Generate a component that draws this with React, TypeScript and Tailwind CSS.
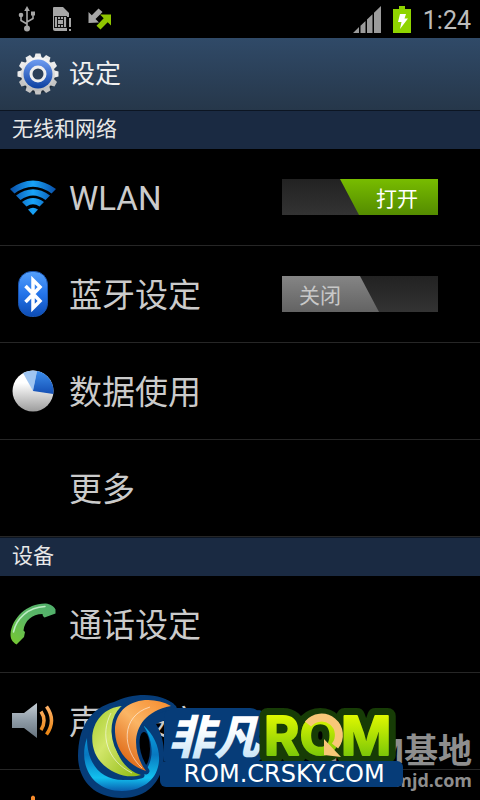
import { useState } from 'react';
import type { ReactNode } from 'react';

interface SettingRowProps {
  icon?: ReactNode;
  label: string;
  children?: ReactNode;
}

const UsbIcon = () => (
  <svg viewBox="0 0 18 26" className="h-[26px] w-[18px]" fill="none" stroke="#a6a6a6" strokeWidth="1.6">
    <path d="M9 3v18M9 18 3 14.500V9M9 16l6-3.500V8" />
    <path d="M9 0 6.200 5h5.600z" fill="#a6a6a6" stroke="none" />
    <circle cx="9" cy="22.500" r="3" fill="#a6a6a6" stroke="none" />
    <circle cx="3" cy="9" r="2.300" fill="#a6a6a6" stroke="none" />
    <path d="M13 5.500h4v4h-4z" fill="#a6a6a6" stroke="none" />
  </svg>
);

const SimIcon = () => (
  <svg viewBox="0 0 20 26" className="h-[26px] w-5">
    <path d="M1 2q0-1 1-1h9l6 6v16q0 2-2 2H3q-2 0-2-2z" fill="#a6a6a6" />
    <rect x="15" y="11" width="5" height="15" fill="#000" />
    <path d="M17 12h2v9h-2zM17 23h2v2h-2z" fill="#a6a6a6" />
    <rect x="2.500" y="10.500" width="12" height="11" fill="none" stroke="#111" />
    <path d="M5.500 10.500v3M8.500 10.500v3M11.500 10.500v3M5.500 18.500v3M8.500 18.500v3M11.500 18.500v3" stroke="#111" />
    <rect x="5.500" y="13.500" width="6" height="5" fill="none" stroke="#111" />
  </svg>
);

const SyncIcon = () => (
  <svg viewBox="0 0 24 22" className="h-[22px] w-6">
    <path d="M.500 15V4l3.300 3.300L10.500 .500l4 3.500-7 7L11 14.500z" fill="#a6a6a6" />
    <path d="M23 6.500v11l-3.300-3.300L12.500 21.500l-4-3.800 7.200-7.400L12 6.500z" fill="#8fc400" />
  </svg>
);

const SignalIcon = () => (
  <svg viewBox="0 0 28 27" className="h-[27px] w-7" fill="#9b9b9b">
    <path d="M0 27 6 21v6zM7.500 19.800l5-4.900V27h-5zM14 13.500l5.500-5.300V27H14zM21 6.700 28 0v27h-7z" />
  </svg>
);

const BatteryIcon = () => (
  <svg viewBox="0 0 18 27" className="h-[27px] w-[18px]">
    <path d="M6 0h6v3h6v24H0V3h6z" fill="#8fd400" />
    <path d="M7 8h6l-1.500 4.500H15L7 23l1.500-7H5z" fill="#fff" />
  </svg>
);

const TEETH = [0, 30, 60, 90, 120, 150, 180, 210, 240, 270, 300, 330];

const GearIcon = () => (
  <svg viewBox="0 0 42 42" className="h-[42px] w-[42px]">
    <defs>
      <linearGradient id="gearMetal" gradientUnits="userSpaceOnUse" x1="0" y1="0" x2="0" y2="42">
        <stop offset="0" stopColor="#fff" />
        <stop offset="1" stopColor="#b4b4b4" />
      </linearGradient>
      <linearGradient id="gearBlue" x1="0" y1="0" x2="0" y2="1">
        <stop offset="0" stopColor="#6f9df2" />
        <stop offset="1" stopColor="#0c3fa0" />
      </linearGradient>
    </defs>
    <circle cx="21" cy="22" r="18" fill="#1b2733" />
    <g>
      {TEETH.map((angle) => (
        <path key={angle} d="M17 6l1.500-5.500h5L25 6z" fill={angle > 90 && angle < 270 ? '#c4c4c4' : '#ececec'} transform={`rotate(${angle} 21 21)`} />
      ))}
    </g>
    <circle cx="21" cy="21" r="17" fill="url(#gearMetal)" />
    <circle cx="21" cy="21" r="14.500" fill="url(#gearBlue)" />
    <circle cx="21" cy="21" r="7" fill="#2b3f58" stroke="#eee" strokeWidth="3" />
  </svg>
);

const WifiIcon = () => (
  <svg viewBox="0 0 46 36" className="h-9 w-[46px]">
    <defs>
      <linearGradient id="wifiBlue" gradientUnits="userSpaceOnUse" x1="0" y1="0" x2="46" y2="0">
        <stop offset="0" stopColor="#0a4fa8" />
        <stop offset="0.5" stopColor="#18a4f8" />
        <stop offset="1" stopColor="#0a4fa8" />
      </linearGradient>
    </defs>
    <g fill="url(#wifiBlue)">
      <path d="M0 10Q23-7 46 10l-4.500 4.500Q23 1 4.500 14.500z" />
      <path d="M6 16.500Q23 4 40 16.500L35.500 21Q23 12 10.500 21z" />
      <path d="M12 23Q23 15 34 23L29.500 27.500Q23 23 16.500 27.500z" />
      <path d="M18 30.500Q23 27 28 30.500L23 36z" />
    </g>
  </svg>
);

const BluetoothIcon = () => (
  <svg viewBox="0 0 30 46" className="h-[46px] w-[30px]">
    <defs>
      <linearGradient id="btBlue" x1="0" y1="0" x2="0" y2="1">
        <stop offset="0" stopColor="#55a0fb" />
        <stop offset="0.5" stopColor="#2474ea" />
        <stop offset="1" stopColor="#0d4cb4" />
      </linearGradient>
    </defs>
    <rect x="0.500" y="0.500" width="29" height="45" rx="13" fill="url(#btBlue)" stroke="#1a55b0" />
    <path d="M7.500 15 22 30 15 37V9l7 7L7.500 31" fill="none" stroke="#fff" strokeWidth="3.500" />
  </svg>
);

const DataUsageIcon = () => (
  <svg viewBox="0 0 42 42" className="h-[42px] w-[42px]">
    <defs>
      <linearGradient id="pieWhite" x1="0" y1="0" x2="0" y2="1">
        <stop offset="0.3" stopColor="#fff" />
        <stop offset="1" stopColor="#9c9c9c" />
      </linearGradient>
      <linearGradient id="pieBlue" x1="0" y1="0" x2="0" y2="1">
        <stop offset="0" stopColor="#3c8eec" />
        <stop offset="1" stopColor="#144fb4" />
      </linearGradient>
    </defs>
    <circle cx="21" cy="21" r="20.500" fill="url(#pieWhite)" />
    <path d="M21 21 11 3A20.500 20.500 0 0 1 25 .900z" fill="#9fc5f1" />
    <path d="M21 21 25 .900A20.500 20.500 0 0 1 41.300 24z" fill="url(#pieBlue)" />
  </svg>
);

const PhoneIcon = () => (
  <svg viewBox="0 0 46 42" className="h-[42px] w-[46px]">
    <defs>
      <linearGradient id="phoneGreen" x1="1" y1="0" x2="0" y2="1">
        <stop offset="0" stopColor="#4fae6c" />
        <stop offset="0.5" stopColor="#5cb765" />
        <stop offset="1" stopColor="#77c92e" />
      </linearGradient>
    </defs>
    <path d="M6.500 41.500C2 38.500 .500 36 .500 31 2 15 17 0 36 .500c4 .500 8 2.500 9.500 6V10.500L34.500 14.500q-2-.500-2-3.500C22 11 14.500 18 13.500 27.500l1.500 1.500-1 5z" fill="url(#phoneGreen)" />
    <path d="M3.500 29C6 16 18 4 35 3.500" fill="none" stroke="#bdecc4" strokeWidth="1.500" strokeLinecap="round" />
  </svg>
);

const SoundIcon = () => (
  <svg viewBox="0 0 42 36" className="h-9 w-[42px]">
    <defs>
      <linearGradient id="speakerSteel" x1="0" y1="0" x2="0" y2="1">
        <stop offset="0" stopColor="#c5ced5" />
        <stop offset="0.500" stopColor="#8e9ba6" />
        <stop offset="1" stopColor="#66737e" />
      </linearGradient>
      <linearGradient id="waveOrange" x1="0" y1="0" x2="0" y2="1">
        <stop offset="0" stopColor="#ffb268" />
        <stop offset="1" stopColor="#e98412" />
      </linearGradient>
    </defs>
    <path d="M0 10h12L25 0v35L12 25H0z" fill="url(#speakerSteel)" />
    <path d="M29 8.500q6 9 0 18.500M34.500 3.500q10 14 0 28" fill="none" stroke="url(#waveOrange)" strokeWidth="3.500" />
  </svg>
);

const DisplayIcon = () => (
  <svg viewBox="0 0 46 46" className="h-[46px] w-[46px]">
    <path d="M21 2q2-3 4 0v10h-4z" fill="#f58a2c" />
    <circle cx="23" cy="26" r="11" fill="#f9a13c" />
  </svg>
);

const SettingRow = ({ icon, label, children }: SettingRowProps) => (
  <li className="flex h-[97px] shrink-0 items-center border-b border-[#262626] pr-[42px] pl-[9px]">
    <span className="flex w-12 shrink-0 items-center justify-center">{icon}</span>
    <span className="mt-1 ml-3 flex-1 whitespace-nowrap text-[33px] leading-10 text-[#cbcbcb]">{label}</span>
    {children}
  </li>
);

const SectionTitle = ({ children }: { children: ReactNode }) => (
  <h2 className="h-[39px] shrink-0 border-t border-[#0c1522] bg-[#1a2a42] px-3 text-[21px] leading-9 text-[#e8e8e8]">
    {children}
  </h2>
);

const Toggle = ({ label, defaultOn = false }: { label: string; defaultOn?: boolean }) => {
  const [on, setOn] = useState(defaultOn);

  return (
    <button
      type="button"
      role="switch"
      aria-checked={on}
      aria-label={label}
      onClick={() => setOn(!on)}
      className={`flex h-9 w-[156px] shrink-0 bg-linear-to-b from-[#222] to-[#333] ${on ? 'justify-end' : 'justify-start'}`}
    >
      {on ? (
        <span className="h-9 w-[98px] bg-linear-to-b from-[#78bc00] to-[#548c00] pr-5 text-right text-[21px] leading-10 text-white [clip-path:polygon(0_0,100%_0,100%_100%,19px_100%)]">
          打开
        </span>
      ) : (
        <span className="h-9 w-[97px] bg-linear-to-b from-[#858585] to-[#636363] pl-[17px] text-left text-[21px] leading-10 text-[#c8c8c8] [clip-path:polygon(0_0,78px_0,100%_100%,0_100%)]">
          关闭
        </span>
      )}
    </button>
  );
};

const SiteLogo = () => (
  <svg viewBox="0 0 326 106" className="h-[106px] w-[326px]">
    <defs>
      <linearGradient id="ringBlue" x1="0" y1="0" x2="0" y2="1">
        <stop offset="0" stopColor="#08a8e4" />
        <stop offset="0.450" stopColor="#0878c0" />
        <stop offset="0.800" stopColor="#12c0ee" />
        <stop offset="1" stopColor="#0a5fb0" />
      </linearGradient>
      <linearGradient id="leafGreen" x1="0" y1="0" x2="1" y2="1">
        <stop offset="0" stopColor="#a5cc2c" />
        <stop offset="0.400" stopColor="#d2e66a" />
        <stop offset="1" stopColor="#8cb80e" />
      </linearGradient>
      <linearGradient id="leafOrange" x1="1" y1="0" x2="0.300" y2="1">
        <stop offset="0" stopColor="#f58a2c" />
        <stop offset="0.500" stopColor="#fbb565" />
        <stop offset="1" stopColor="#dd6412" />
      </linearGradient>
      <linearGradient id="wordWhite" x1="0" y1="0" x2="0" y2="1">
        <stop offset="0.400" stopColor="#fff" />
        <stop offset="1" stopColor="#b9def6" />
      </linearGradient>
      <linearGradient id="wordGreen" gradientUnits="userSpaceOnUse" x1="0" y1="20" x2="0" y2="64">
        <stop offset="0" stopColor="#e2fa00" />
        <stop offset="1" stopColor="#76c408" />
      </linearGradient>
    </defs>
    {/* dark outline plates */}
    <g fill="#063c78">
      <path d="M0 62C0 34 12 14 36 8 56-2 84-2 98 12q4 8-6 12L78 30C94 56 88 104 44 104 14 104 0 84 0 62z" />
      <path d="M96 14h76q9 0 9 9v44H86V24q0-10 10-10z" />
    </g>
    <ellipse cx="66" cy="55" rx="6" ry="17" fill="#000" />
    <path d="M65 31C90 52 88 96 44 97 12 97 0 68 9 44c0 26 14 42 36 42 30 0 36-32 20-55z" fill="url(#ringBlue)" />
    <g stroke="#063c78" strokeWidth="7" strokeLinejoin="round" paintOrder="stroke">
      <path d="M45 12C22 13 8 36 17 59c8 18 30 27 46 22C38 74 27 38 45 12z" fill="url(#leafGreen)" />
      <path d="M93 12C70-1 36 7 37 38c1 19 13 33 31 39C52 56 52 20 93 12z" fill="url(#leafOrange)" />
    </g>
    <path d="M33 19C22 40 28 66 54 79M72 13C42 22 44 56 64 74" fill="none" stroke="#fff" strokeOpacity="0.550" />
    <text
      x="90"
      y="60"
      fill="url(#wordWhite)"
      stroke="#063c78"
      strokeWidth="12"
      strokeLinejoin="round"
      paintOrder="stroke"
      className="font-['Noto_Sans_CJK_SC',sans-serif] text-[46px] font-black italic"
    >
      非凡
    </text>
    <text
      x="186"
      y="61"
      fill="#173c06"
      stroke="#173c06"
      strokeWidth="16"
      strokeLinejoin="round"
      aria-hidden="true"
      className="font-['Inter',sans-serif] text-[54px] font-bold"
    >
      ROM
    </text>
    <text
      x="186"
      y="61"
      fill="url(#wordGreen)"
      stroke="url(#wordGreen)"
      strokeWidth="2"
      strokeLinejoin="round"
      className="font-['Inter',sans-serif] text-[54px] font-bold"
    >
      ROM
    </text>
    <path d="M230 30A17 17 0 0 1 257 52" fill="none" stroke="#f8c777" strokeWidth="8" />
    <path d="M246 45l17 18-17-2z" fill="#f8c777" />
    <rect x="82" y="67" width="243" height="26" rx="6" fill="#063c78" />
    <text x="206" y="88" textAnchor="middle" fill="#fff" className="font-['DejaVu_Sans',sans-serif] text-[24px]">
      ROM.CRSKY.COM
    </text>
  </svg>
);

export default function App() {
  return (
    <div className="relative flex h-screen flex-col overflow-hidden bg-black font-['Roboto','Noto_Sans_CJK_SC',sans-serif]">
      <div className="flex h-[38px] shrink-0 items-center justify-between pr-[9px] pl-[18px]">
        <div className="flex items-center gap-4">
          <UsbIcon />
          <SimIcon />
          <SyncIcon />
        </div>
        <div className="flex items-center gap-3">
          <SignalIcon />
          <BatteryIcon />
          <span className="mt-1 text-[25px] leading-8 text-[#bcbcbc]">1:24</span>
        </div>
      </div>

      <header className="flex h-[72px] shrink-0 items-center gap-2.5 bg-linear-to-b from-[#304a68] to-[#26374a] pl-[17px]">
        <GearIcon />
        <h1 className="text-[26px] leading-8 text-[#f0f0f0]">设定</h1>
      </header>

      <main className="min-h-0 flex-1 overflow-hidden">
        <SectionTitle>无线和网络</SectionTitle>
        <ul>
          <SettingRow icon={<WifiIcon />} label="WLAN">
            <Toggle label="WLAN" defaultOn />
          </SettingRow>
          <SettingRow icon={<BluetoothIcon />} label="蓝牙设定">
            <Toggle label="蓝牙设定" />
          </SettingRow>
          <SettingRow icon={<DataUsageIcon />} label="数据使用" />
          <SettingRow label="更多" />
        </ul>
        <SectionTitle>设备</SectionTitle>
        <ul>
          <SettingRow icon={<PhoneIcon />} label="通话设定" />
          <SettingRow icon={<SoundIcon />} label="声音设定" />
          <SettingRow icon={<DisplayIcon />} label="" />
        </ul>
      </main>

      {/* Watermarks */}
      <div className="absolute right-2 bottom-2 text-right font-bold text-[#8e8e8e]">
        <p className="text-[34px] leading-[34px]">ROM基地</p>
        <p className="font-['Open_Sans',sans-serif] text-[18px] leading-6">www.romjd.com</p>
      </div>
      <div className="absolute bottom-0 left-[78px]">
        <SiteLogo />
      </div>
    </div>
  );
}
